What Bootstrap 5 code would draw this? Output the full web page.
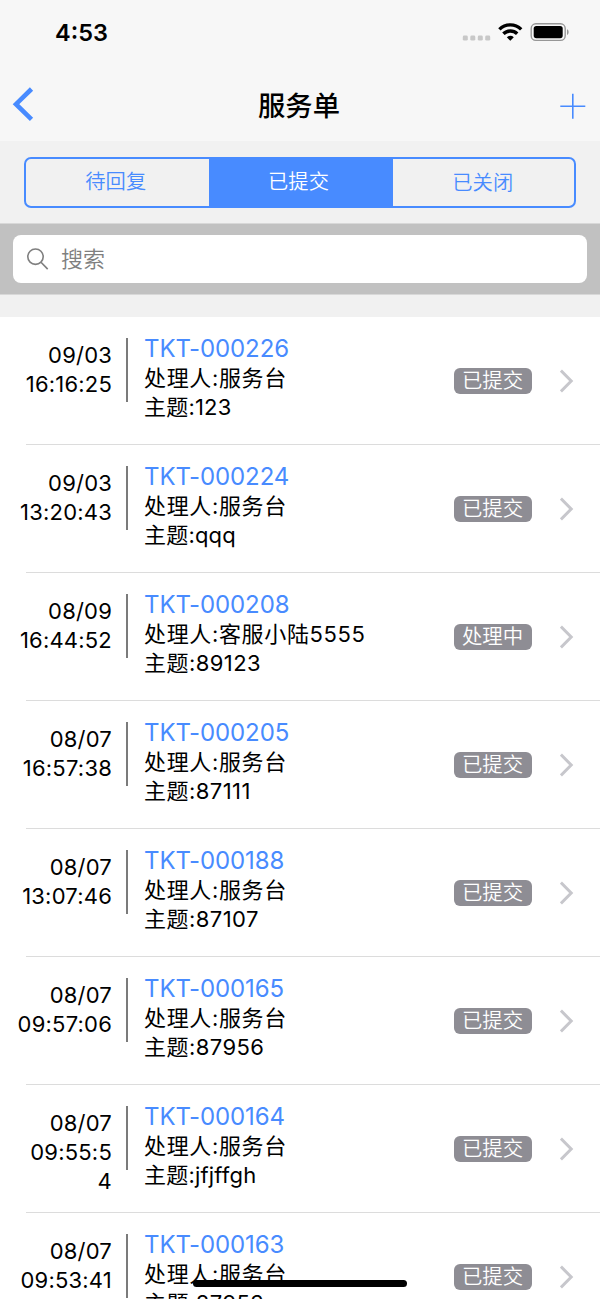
<!DOCTYPE html>
<html lang="zh-CN">
<head>
<meta charset="utf-8">
<meta name="viewport" content="width=device-width, initial-scale=1">
<title>服务单</title>
<link href="https://cdn.jsdelivr.net/npm/bootstrap@5.3.0/dist/css/bootstrap.min.css" rel="stylesheet">
<style>
  :root { --accent: #488bff; }
  html, body { height: 1299px; overflow: hidden; }
  body { font-family: Inter, "Noto Sans CJK SC", sans-serif; font-size: 22px; line-height: 29px; color: #000; background: #fff; }
  svg { display: block; flex: none; }
  .topbar { height: 141px; background: #f7f7f7; }
  .status-row { height: 64px; padding: 0 30px 0 55px; }
  .clock { font-size: 23.5px; font-weight: 600; padding-top: 1px; }
  .title-row { height: 77px; padding: 4px 14px 0 12px; }
  .title-text { font-size: 27.3px; font-weight: 500; line-height: 40px; padding: 5px 0 0 2px; }
  .segment-bar { height: 82px; padding: 16px 24px 0; background: #f1f1f1; }
  .segments { height: 51px; border: 1.5px solid var(--accent); border-width: 2px 1px 2px 2px; border-right-width: 2px; border-radius: 7px; overflow: hidden; }
  .segments .btn { padding: 0 4px 2px 0; border: 0; border-radius: 0; font-size: 20.3px; font-weight: 350; line-height: 24px; color: var(--accent); }
  .segments .btn.active { background: var(--accent); color: #fff; flex: 0 0 184px; margin-left: -1px; }
  .segments .btn:last-child { padding: 0 1px 0 0; }
  .search-wrap { height: 72px; padding: 11px 13px; background: #c1c1c1; border-top: 1px solid #d8d8d8; border-bottom: 1px solid #d8d8d8; }
  .search-box { height: 48px; padding-left: 14px; gap: 12px; border-radius: 8px; background: #fff; color: #7f7f7f; font-weight: 350; }
  .gap-band { height: 22px; background: #f1f1f1; }
  .ticket { height: 128px; padding-right: 26px; border: 0; }
  .ticket::after { content: ""; position: absolute; left: 26px; right: 0; bottom: 0; height: 1px; background: #dcdcdc; }
  .ticket-time { width: 112px; padding-top: 24px; letter-spacing: .2px; }
  .ticket-rule { width: 2px; height: 64px; margin: 21px 16px 0 14px; background: #7b7b7b; }
  .ticket-info { padding-top: 17px; white-space: nowrap; }
  .ticket-no { font-size: 24px; color: var(--accent); letter-spacing: -.1px; margin-bottom: 1px; }
  .handler { letter-spacing: .65px; }
  .subject { letter-spacing: .2px; }
  .subject-wide { letter-spacing: .45px; }
  .state { width: 78px; height: 26px; border-radius: 6px; background: #8e8d94; color: #fff; font-size: 20.4px; font-weight: 350; line-height: 26px; margin-right: 28px; padding-right: 1px; }
  .home-bar { left: 193px; top: 1280px; width: 214px; height: 7px; border-radius: 4px; background: #000; z-index: 5; }
</style>
</head>
<body>
<svg width="0" height="0" class="position-absolute">
  <symbol id="chevron" viewBox="0 0 14 24"><path d="M.9 1.6 11.2 12 .9 22.4" fill="none" stroke="#c7c7cc" stroke-width="3"/></symbol>
</svg>

<header class="topbar">
  <div class="status-row d-flex align-items-center justify-content-between">
    <span class="clock">4:53</span>
    <svg width="108" height="20" viewBox="0 0 108 20">
      <g fill="#c8c8c8"><rect x=".8" y="13.6" width="5" height="5" rx="1.4"/><rect x="8.3" y="13.6" width="5" height="5" rx="1.4"/><rect x="15.8" y="13.6" width="5" height="5" rx="1.4"/><rect x="23.2" y="13.6" width="5" height="5" rx="1.4"/></g>
      <g fill="none" stroke="#000" stroke-width="3.4"><path d="M37.4 7.4a15.5 15.5 0 0 1 21.8 0"/><path d="M41.4 11.8a9.8 9.8 0 0 1 13.8 0"/></g>
      <path d="M44.8 15.2a5 5 0 0 1 7 0L48.3 18.8Z" fill="#000"/>
      <rect x="69.2" y="1.8" width="34" height="16.6" rx="4.6" fill="none" stroke="#979797" stroke-width="1.4"/>
      <rect x="71.7" y="4" width="29" height="12.2" rx="2.6"/>
      <path d="M105 7.3c2.2.8 2.2 4.8 0 5.6Z" fill="#979797"/>
    </svg>
  </div>
  <div class="title-row d-flex align-items-center justify-content-between">
    <svg width="24" height="38" viewBox="0 0 24 38"><path d="M19.5 3 4 18.2 19.5 33.4" fill="none" stroke="#488bff" stroke-width="4.6"/></svg>
    <h1 class="title-text m-0">服务单</h1>
    <svg width="26" height="28" viewBox="0 0 26 28"><path d="M12.8 2.7v25M.3 15.2h25" stroke="#488bff" stroke-width="1.6"/></svg>
  </div>
</header>

<nav class="segment-bar">
  <div class="segments d-flex">
    <button class="btn flex-fill w-100" type="button">待回复</button>
    <button class="btn active" type="button">已提交</button>
    <button class="btn flex-fill w-100" type="button">已关闭</button>
  </div>
</nav>

<div class="search-wrap">
  <div class="search-box d-flex align-items-center">
    <svg width="22" height="22" viewBox="0 0 22 22" fill="none" stroke="#7f7f7f" stroke-width="1.6"><circle cx="8.5" cy="8.7" r="7.7"/><path d="m14 14.2 6.7 6.9"/></svg>
    <span>搜索</span>
  </div>
</div>
<div class="gap-band"></div>

<main class="list-group list-group-flush">
  <div class="ticket position-relative d-flex">
    <div class="ticket-time text-end">09/03<br>16:16:25</div>
    <div class="ticket-rule"></div>
    <div class="ticket-info flex-grow-1"><div class="ticket-no">TKT-000226</div><div class="handler">处理人:服务台</div><div class="subject">主题:123</div></div>
    <span class="state text-center align-self-center">已提交</span>
    <svg class="align-self-center" width="14" height="24"><use href="#chevron"/></svg>
  </div>
  <div class="ticket position-relative d-flex">
    <div class="ticket-time text-end">09/03<br>13:20:43</div>
    <div class="ticket-rule"></div>
    <div class="ticket-info flex-grow-1"><div class="ticket-no">TKT-000224</div><div class="handler">处理人:服务台</div><div class="subject">主题:qqq</div></div>
    <span class="state text-center align-self-center">已提交</span>
    <svg class="align-self-center" width="14" height="24"><use href="#chevron"/></svg>
  </div>
  <div class="ticket position-relative d-flex">
    <div class="ticket-time text-end">08/09<br>16:44:52</div>
    <div class="ticket-rule"></div>
    <div class="ticket-info flex-grow-1"><div class="ticket-no">TKT-000208</div><div class="handler">处理人:客服小陆5555</div><div class="subject subject-wide">主题:89123</div></div>
    <span class="state text-center align-self-center">处理中</span>
    <svg class="align-self-center" width="14" height="24"><use href="#chevron"/></svg>
  </div>
  <div class="ticket position-relative d-flex">
    <div class="ticket-time text-end">08/07<br>16:57:38</div>
    <div class="ticket-rule"></div>
    <div class="ticket-info flex-grow-1"><div class="ticket-no">TKT-000205</div><div class="handler">处理人:服务台</div><div class="subject subject-wide">主题:87111</div></div>
    <span class="state text-center align-self-center">已提交</span>
    <svg class="align-self-center" width="14" height="24"><use href="#chevron"/></svg>
  </div>
  <div class="ticket position-relative d-flex">
    <div class="ticket-time text-end">08/07<br>13:07:46</div>
    <div class="ticket-rule"></div>
    <div class="ticket-info flex-grow-1"><div class="ticket-no">TKT-000188</div><div class="handler">处理人:服务台</div><div class="subject subject-wide">主题:87107</div></div>
    <span class="state text-center align-self-center">已提交</span>
    <svg class="align-self-center" width="14" height="24"><use href="#chevron"/></svg>
  </div>
  <div class="ticket position-relative d-flex">
    <div class="ticket-time text-end">08/07<br>09:57:06</div>
    <div class="ticket-rule"></div>
    <div class="ticket-info flex-grow-1"><div class="ticket-no">TKT-000165</div><div class="handler">处理人:服务台</div><div class="subject subject-wide">主题:87956</div></div>
    <span class="state text-center align-self-center">已提交</span>
    <svg class="align-self-center" width="14" height="24"><use href="#chevron"/></svg>
  </div>
  <div class="ticket position-relative d-flex">
    <div class="ticket-time text-end">08/07<br>09:55:5<br>4</div>
    <div class="ticket-rule"></div>
    <div class="ticket-info flex-grow-1"><div class="ticket-no">TKT-000164</div><div class="handler">处理人:服务台</div><div class="subject">主题:jfjffgh</div></div>
    <span class="state text-center align-self-center">已提交</span>
    <svg class="align-self-center" width="14" height="24"><use href="#chevron"/></svg>
  </div>
  <div class="ticket position-relative d-flex">
    <div class="ticket-time text-end">08/07<br>09:53:41</div>
    <div class="ticket-rule"></div>
    <div class="ticket-info flex-grow-1"><div class="ticket-no">TKT-000163</div><div class="handler">处理人:服务台</div><div class="subject subject-wide">主题:87953</div></div>
    <span class="state text-center align-self-center">已提交</span>
    <svg class="align-self-center" width="14" height="24"><use href="#chevron"/></svg>
  </div>
</main>
<div class="home-bar position-fixed"></div>
<script src="https://cdn.jsdelivr.net/npm/bootstrap@5.3.0/dist/js/bootstrap.bundle.min.js"></script>
</body>
</html>
